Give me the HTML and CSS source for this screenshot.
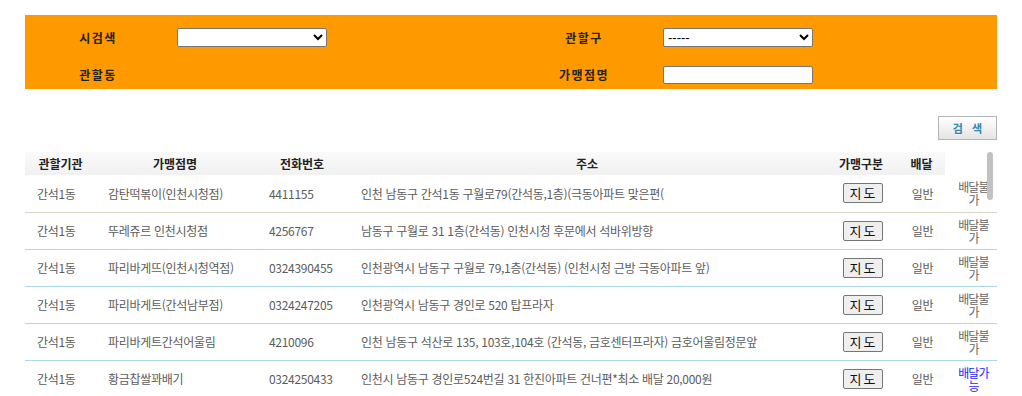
FILE: index.html
```html
<!DOCTYPE html>
<html lang="ko">
<head>
  <meta charset="UTF-8" />
  <title>가맹점 검색</title>
  <link rel="stylesheet" href="styles.css">
</head>
<body>
  <div class="wrap">
    <table class="search">
      <colgroup>
        <col class="c-label"><col><col class="c-label"><col>
      </colgroup>
      <tr class="r1">
        <th>시검색</th>
        <td><select class="sel"><option></option></select></td>
        <th>관할구</th>
        <td><select class="sel"><option>-----</option></select></td>
      </tr>
      <tr class="r2">
        <th>관할동</th>
        <td></td>
        <th>가맹점명</th>
        <td><input class="txt" type="text" /></td>
      </tr>
    </table>

    <div class="btn-row">
      <button class="btn-search">검&nbsp;&nbsp;&nbsp;색</button>
    </div>

    <div class="list">
      <table class="list-head">
        <colgroup>
          <col style="width:71px"><col style="width:158px"><col style="width:96px">
          <col style="width:474px"><col style="width:74px"><col style="width:47px">
        </colgroup>
        <tr>
          <th>관할기관</th>
          <th>가맹점명</th>
          <th>전화번호</th>
          <th>주소</th>
          <th>가맹구분</th>
          <th>배달</th>
        </tr>
      </table>

      <table class="list-body">
        <colgroup>
          <col style="width:71px"><col style="width:161px"><col style="width:92px">
          <col style="width:481px"><col style="width:65px"><col style="width:55px"><col style="width:47px">
        </colgroup>
        <tr class="first">
          <td>간석1동</td>
          <td>감탄떡볶이(인천시청점)</td>
          <td>4411155</td>
          <td>인천 남동구 간석1동 구월로79(간석동,1층)(극동아파트 맞은편(</td>
          <td class="mid"><button class="btn-map">지도</button></td>
          <td class="mid">일반</td>
          <td class="dlv">배달불가</td>
        </tr>
        <tr>
          <td>간석1동</td>
          <td>뚜레쥬르 인천시청점</td>
          <td>4256767</td>
          <td>남동구 구월로 31 1층(간석동) 인천시청 후문에서 석바위방향</td>
          <td class="mid"><button class="btn-map">지도</button></td>
          <td class="mid">일반</td>
          <td class="dlv">배달불가</td>
        </tr>
        <tr>
          <td>간석1동</td>
          <td>파리바게뜨(인천시청역점)</td>
          <td>0324390455</td>
          <td>인천광역시 남동구 구월로 79,1층(간석동) (인천시청 근방 극동아파트 앞)</td>
          <td class="mid"><button class="btn-map">지도</button></td>
          <td class="mid">일반</td>
          <td class="dlv">배달불가</td>
        </tr>
        <tr>
          <td>간석1동</td>
          <td>파리바게트(간석남부점)</td>
          <td>0324247205</td>
          <td>인천광역시 남동구 경인로 520 탑프라자</td>
          <td class="mid"><button class="btn-map">지도</button></td>
          <td class="mid">일반</td>
          <td class="dlv">배달불가</td>
        </tr>
        <tr>
          <td>간석1동</td>
          <td>파리바게트간석어울림</td>
          <td>4210096</td>
          <td>인천 남동구 석산로 135, 103호,104호 (간석동, 금호센터프라자) 금호어울림정문앞</td>
          <td class="mid"><button class="btn-map">지도</button></td>
          <td class="mid">일반</td>
          <td class="dlv">배달불가</td>
        </tr>
        <tr>
          <td>간석1동</td>
          <td>황금찹쌀꽈배기</td>
          <td>0324250433</td>
          <td>인천시 남동구 경인로524번길 31 한진아파트 건너편*최소 배달 20,000원</td>
          <td class="mid"><button class="btn-map">지도</button></td>
          <td class="mid">일반</td>
          <td class="dlv ok">배달가능</td>
        </tr>
      </table>

      <span class="thumb"></span>
    </div>
  </div>
</body>
</html>
```

FILE: styles.css
```css
body {
  margin: 0;
  font-family: "Noto Sans CJK KR", "Noto Sans", sans-serif;
  background: #fff;
  color: #555;
  overflow: hidden;
}
.wrap {
  padding: 15px 25px 0;
}

/* search box */
.search {
  width: 100%;
  border-collapse: collapse;
  table-layout: fixed;
  background: #ff9900;
}
.search .c-label {
  width: 146px;
}
.search .r1 {
  height: 41px;
}
.search .r2 {
  height: 33px;
}
.search th,
.search td {
  padding: 4px 0 0;
  vertical-align: middle;
}
.search th {
  font-size: 12px;
  font-weight: bold;
  color: #222;
  letter-spacing: 1.5px;
}
.search td {
  padding-left: 6px;
}
.sel {
  width: 150px;
  height: 19px;
  font-size: 13px;
  font-family: "Liberation Sans", sans-serif;
  border: 1px solid #767676;
  border-radius: 2px;
  background: #fff;
  display: block;
}
.txt {
  width: 150px;
  height: 18px;
  box-sizing: border-box;
  border: 1px solid #767676;
  border-radius: 2px;
  display: block;
  margin-top: 1px;
}

/* search button */
.btn-row {
  display: flex;
  justify-content: flex-end;
  padding-top: 27px;
  padding-bottom: 12px;
}
.btn-search {
  width: 59px;
  height: 24px;
  border: 1px solid #b4b4b4;
  background: linear-gradient(#ffffff, #e4e4e4);
  color: #3386ad;
  font-family: "Noto Sans CJK KR", sans-serif;
  font-size: 11px;
  font-weight: bold;
  padding: 0;
  cursor: pointer;
}

/* list */
.list {
  position: relative;
}
.list table {
  border-collapse: collapse;
  table-layout: fixed;
}
.list-head {
  width: 920px;
  background: linear-gradient(#fafafa, #f1f1f1);
}
.list-head th {
  height: 23px;
  padding: 0;
  font-size: 12px;
  font-weight: bold;
  color: #222;
  text-align: center;
}
.list-body {
  width: 972px;
}
.list-body tr {
  height: 37px;
}
.list-body td {
  padding: 0 0 0 12px;
  font-size: 12px;
  color: #5c5c5c;
  letter-spacing: -0.3px;
  border-bottom: 1px solid #add8e6;
  white-space: nowrap;
  overflow: hidden;
}
.list-body tr.first td {
  border-bottom-color: #d6d9c8;
}
.list-body td.mid {
  padding: 0;
  text-align: center;
}
.list-body td.dlv {
  padding: 0 4px;
  text-align: center;
  white-space: normal;
  line-height: 13px;
  letter-spacing: -0.8px;
  color: #666;
}
.list-body td.ok {
  color: #2222ff;
}
.btn-map {
  width: 40px;
  height: 20px;
  padding: 0;
  border: 1px solid #767676;
  border-radius: 2px;
  background: #efefef;
  color: #111;
  font-family: "Noto Sans CJK KR", sans-serif;
  font-size: 13px;
  letter-spacing: 2px;
  text-indent: 2px;
  line-height: 18px;
}

.thumb {
  position: absolute;
  top: 0;
  right: 4px;
  width: 6px;
  height: 48px;
  border-radius: 3px;
  background: #c1c1c1;
}
```
